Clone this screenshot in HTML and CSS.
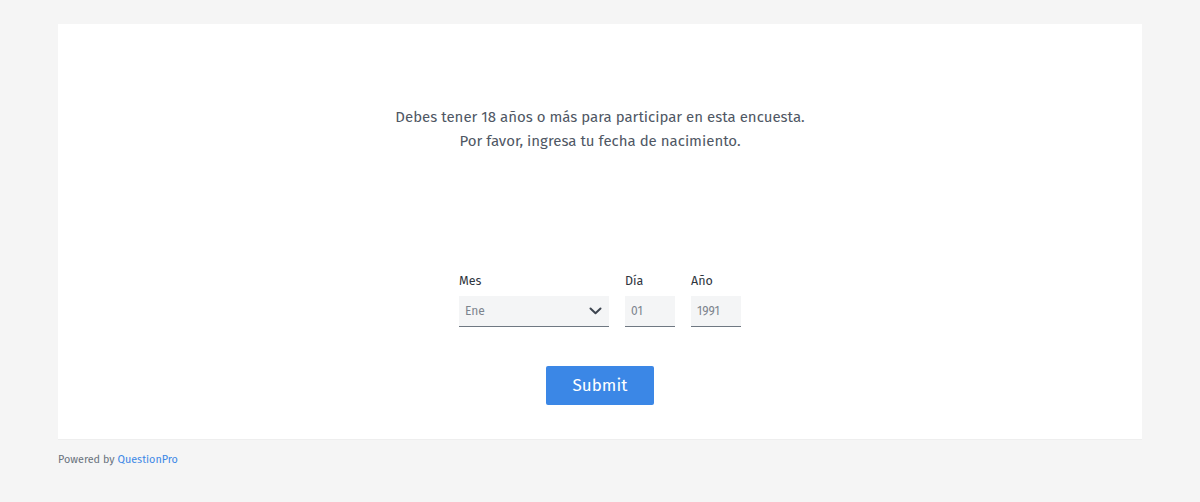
FILE: index.html
```html
<!DOCTYPE html>
<html lang="es">
<head>
<meta charset="utf-8">
<title>Encuesta</title>
<link rel="stylesheet" href="styles.css">
</head>
<body>
<div class="page">
  <main class="card">
    <div class="intro">
      <p>Debes tener 18 años o más para participar en esta encuesta.</p>
      <p>Por favor, ingresa tu fecha de nacimiento.</p>
    </div>
    <form class="form">
      <div class="fields">
        <div class="field field-month">
          <label class="label">Mes</label>
          <div class="select">
            <span class="value">Ene</span>
            <svg class="chevron" width="13" height="8" viewBox="0 0 13 8"><path d="M1.5 1.5 L6.5 6.2 L11.5 1.5" fill="none" stroke="#3d4550" stroke-width="2" stroke-linecap="round" stroke-linejoin="round"/></svg>
          </div>
        </div>
        <div class="field field-small">
          <label class="label">Día</label>
          <div class="input"><span class="value">01</span></div>
        </div>
        <div class="field field-small">
          <label class="label">Año</label>
          <div class="input"><span class="value">1991</span></div>
        </div>
      </div>
      <button type="button" class="submit">Submit</button>
    </form>
  </main>
  <footer class="footer">Powered by <a class="brand" href="#">QuestionPro</a></footer>
</div>
</body>
</html>
```
FILE: styles.css
```css
* { box-sizing: border-box; }
html, body { margin: 0; padding: 0; }
body {
  background: #f5f5f5;
  font-family: "Fira Sans", "Lato", "Noto Sans", sans-serif;
  color: #545d69;
}
.page {
  padding: 24px 58px 0;
}
.card {
  background: #fff;
  height: 415px;
  padding-top: 81px;
  display: flex;
  flex-direction: column;
  align-items: center;
  box-shadow: 0 1px 0 #eeeeee;
}
.intro p {
  margin: 0;
  text-align: center;
  font-size: 15px;
  line-height: 24px;
  color: #4f5764;
}
.form {
  margin-top: 118px;
  display: flex;
  flex-direction: column;
  align-items: center;
}
.fields {
  display: flex;
  gap: 16px;
}
.field {
  display: flex;
  flex-direction: column;
}
.field-month { width: 150px; }
.field-small { width: 50px; }
.label {
  font-size: 12.5px;
  line-height: 20px;
  height: 20px;
  color: #2f3640;
  font-weight: 400;
  margin-bottom: 5px;
}
.select, .input {
  height: 31px;
  background: #f4f5f6;
  border-bottom: 1px solid #6f7882;
  display: flex;
  align-items: center;
  padding: 0 6px;
  font-size: 12px;
  color: #7c848d;
}
.select { justify-content: space-between; padding-right: 7px; }
.chevron { display: block; }
.submit {
  margin-top: 39px;
  width: 108px;
  height: 39px;
  border: none;
  border-radius: 2px;
  background: #3b87e6;
  color: #fff;
  font-family: inherit;
  font-size: 17px;
  font-weight: 400;
  padding: 0;
}
.footer {
  padding-top: 13px;
  font-size: 10.8px;
  line-height: 16px;
  color: #6a737d;
}
.brand {
  color: #3b87e6;
  text-decoration: none;
  font-weight: 400;
}
```
